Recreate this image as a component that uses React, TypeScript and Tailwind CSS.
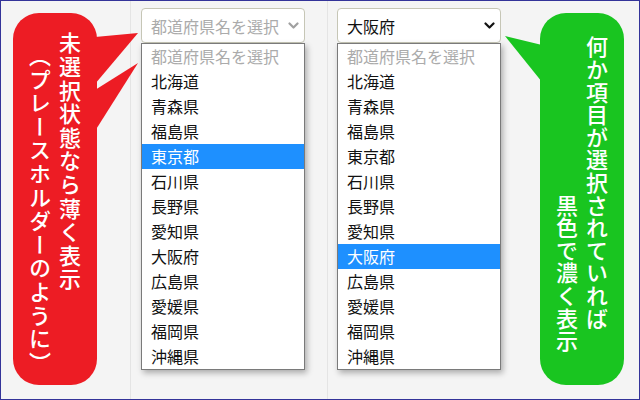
import React from "react";

const prefectures = [
  "北海道",
  "青森県",
  "福島県",
  "東京都",
  "石川県",
  "長野県",
  "愛知県",
  "大阪府",
  "広島県",
  "愛媛県",
  "福岡県",
  "沖縄県",
];

function Chevron({ color }: { color: string }) {
  return (
    <svg width="11" height="7" viewBox="0 0 11 7" className="shrink-0">
      <polyline
        points="1.5,1.5 5.5,5.5 9.5,1.5"
        fill="none"
        stroke={color}
        strokeWidth="2.2"
        strokeLinecap="round"
        strokeLinejoin="round"
      />
    </svg>
  );
}

function SelectDemo({ value, highlight, chevron }: { value: string | null; highlight: string; chevron: string }) {
  return (
    <div className="w-[164px]">
      <div className="h-[35px] w-[164px] border border-[#c6c6b6] rounded-[4px] bg-white flex items-center justify-between pl-[9px] pr-[5px] text-[16px]">
        <span className={value ? "text-[#111111]" : "text-[#ababab]"}>{value ?? "都道府県名を選択"}</span>
        <Chevron color={chevron} />
      </div>
      <div className="w-[164px] border border-[#7a7a7a] bg-white shadow-[2px_3px_6px_rgba(0,0,0,0.3)] text-[16px]">
        <div className="h-[25px] leading-[25px] pl-[9px] text-[#ababab]">都道府県名を選択</div>
        {prefectures.map((p) => (
          <div
            key={p}
            className={
              p === highlight
                ? "h-[25px] leading-[25px] pl-[9px] bg-[#1e90ff] text-white"
                : "h-[25px] leading-[25px] pl-[9px] text-[#111111]"
            }
          >
            {p}
          </div>
        ))}
      </div>
    </div>
  );
}

export default function App() {
  return (
    <div
      className="relative w-[640px] h-[400px] border border-[#333399] bg-[#f4f4f4] flex overflow-hidden"
      style={{ fontFamily: '"Noto Sans CJK JP", "Noto Sans", sans-serif' }}
    >
      <div className="w-[129px] shrink-0 pl-[12px] pt-[12px]">
        <div className="w-[84px] h-[372px] rounded-[26px] bg-[#ed1c24] flex justify-center pt-[19px]">
          <div className="[writing-mode:vertical-rl] text-white text-[22px] leading-[30px] tracking-[1.6px] font-medium whitespace-pre">
            {"未選択状態なら薄く表示"}
            <br />
            {"\u3000（プレースホルダーのように）"}
          </div>
        </div>
      </div>
      <div className="w-[197px] shrink-0 border-l border-[#e4e4e4] pl-[10px] pt-[7px]">
        <SelectDemo value={null} highlight="東京都" chevron="#a0a0a0" />
      </div>
      <div className="w-[193px] shrink-0 border-l border-[#e4e4e4] pl-[9px] pt-[7px]">
        <SelectDemo value="大阪府" highlight="大阪府" chevron="#111111" />
      </div>
      <div className="flex-1 pl-[20px] pt-[12px]">
        <div className="w-[84px] h-[372px] rounded-[26px] bg-[#19c520] flex justify-center pt-[23px]">
          <div className="[writing-mode:vertical-rl] text-white text-[22px] leading-[30px] tracking-[0.6px] font-medium whitespace-pre">
            {"何か項目が選択されていれば"}
            <br />
            {"\u3000\u3000\u3000\u3000\u3000\u3000\u3000黒色で濃く表示"}
          </div>
        </div>
      </div>
      <svg
        className="absolute left-[-1px] top-[-1px] pointer-events-none"
        width="640"
        height="400"
        viewBox="0 0 640 400"
      >
        <polygon points="95,37 138,33 95,84" fill="#ed1c24" />
        <polygon points="95,90 138,63 95,131" fill="#ed1c24" />
        <polygon points="542,45 505,36 542,82" fill="#19c520" />
      </svg>
    </div>
  );
}
